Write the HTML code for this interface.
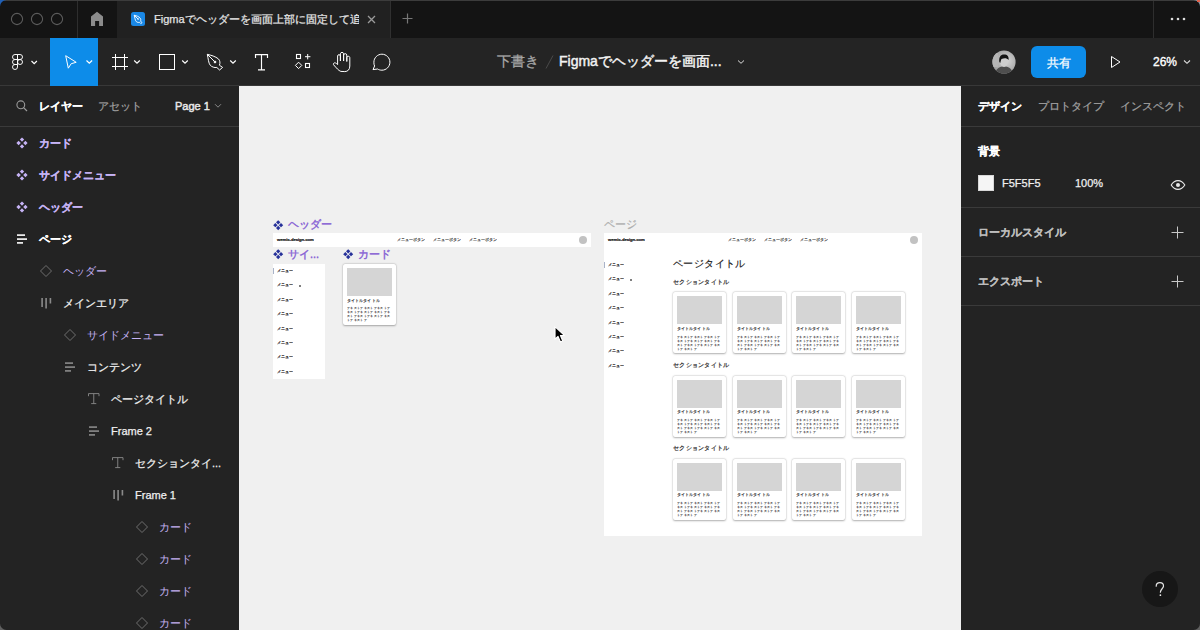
<!DOCTYPE html>
<html lang="ja">
<head>
<meta charset="utf-8">
<style>
*{box-sizing:border-box;margin:0;padding:0}
html,body{width:1200px;height:630px;overflow:hidden;background:#f0f0f0;font-family:"Liberation Sans",sans-serif;position:relative}
.a{position:absolute}
#tabs{left:0;top:0;width:1200px;height:38px;background:#141414}
#tool{left:0;top:38px;width:1200px;height:48px;background:#242424;border-bottom:1px solid #383838}
#lp{left:0;top:86px;width:239px;height:544px;background:#232323}
#rp{left:961px;top:86px;width:239px;height:544px;background:#232323}
.ic{position:absolute;overflow:visible}
.t{position:absolute;white-space:nowrap;line-height:1}
.m{-webkit-text-stroke:0.25px currentColor}
.t[style*="font-weight:bold"]{-webkit-text-stroke:0.15px currentColor}
.div{position:absolute;height:1px;background:#3a3a3a}

.card{position:absolute;width:53px;height:61px;background:#fff;border-radius:2px;box-shadow:0 0.8px 2px rgba(0,0,0,.3),0 0 0 0.5px rgba(0,0,0,.05)}
.card .im{position:absolute;left:4px;top:4px;width:45px;height:28px;background:#d5d5d5}
.sc{position:absolute;transform-origin:0 0;white-space:nowrap;line-height:1}
.card .ct{left:4px;top:34.6px;font-size:16px;letter-spacing:0.4px;color:#333;font-weight:normal;-webkit-text-stroke:0.7px #333;transform:scale(0.25)}
.card .cb{left:4px;top:42.2px;width:176px;white-space:normal;font-size:13px;letter-spacing:0.4px;line-height:15.8px;color:#2a2a2a;font-weight:bold;word-break:break-all;transform:scale(0.25)}
.mt{position:absolute;font-size:4px;line-height:1;color:#333;white-space:nowrap;font-weight:bold}
.mi{position:absolute;font-size:4px;line-height:1;color:#222;white-space:nowrap;font-weight:bold}
</style>
</head>
<body>
<!--CANVAS-->
<div id="canvas" class="a" style="left:239px;top:86px;width:722px;height:544px;background:#f0f0f0"></div>
<svg class="ic" style="left:273.3px;top:220.0px" width="10.4" height="10.4" viewBox="-5.5 -5.5 11 11"><g fill="#27329a"><path d="M0 -5.3L2.3 -3L0 -0.7L-2.3 -3Z"/><path d="M0 5.3L2.3 3L0 0.7L-2.3 3Z"/><path d="M-5.3 0L-3 2.3L-0.7 0L-3 -2.3Z"/><path d="M5.3 0L3 2.3L0.7 0L3 -2.3Z"/></g></svg><div class="t" style="left:288px;top:219.1px;font-size:11px;color:#8761d4;-webkit-text-stroke:0.4px #8761d4">ヘッダー</div>
<div class="a" style="left:273px;top:233px;width:318px;height:14px;background:#fff"></div><div class="sc" style="left:277px;top:237.1px;font-size:17px;letter-spacing:-0.35px;color:#111;font-weight:bold;-webkit-text-stroke:0.8px #111;transform:scale(0.25)">wemix-design.com</div><div class="sc" style="left:397px;top:238px;font-size:16px;letter-spacing:-0.15px;color:#444;-webkit-text-stroke:0.8px #444;transform:scale(0.25)">メニューボタン</div><div class="sc" style="left:433px;top:238px;font-size:16px;letter-spacing:-0.15px;color:#444;-webkit-text-stroke:0.8px #444;transform:scale(0.25)">メニューボタン</div><div class="sc" style="left:468.5px;top:238px;font-size:16px;letter-spacing:-0.15px;color:#444;-webkit-text-stroke:0.8px #444;transform:scale(0.25)">メニューボタン</div><div class="a" style="left:578.5px;top:235.5px;width:8.6px;height:8.6px;border-radius:50%;background:#c2c2c2"></div>
<svg class="ic" style="left:273.3px;top:249.4px" width="10.4" height="10.4" viewBox="-5.5 -5.5 11 11"><g fill="#27329a"><path d="M0 -5.3L2.3 -3L0 -0.7L-2.3 -3Z"/><path d="M0 5.3L2.3 3L0 0.7L-2.3 3Z"/><path d="M-5.3 0L-3 2.3L-0.7 0L-3 -2.3Z"/><path d="M5.3 0L3 2.3L0.7 0L3 -2.3Z"/></g></svg><div class="t" style="left:288px;top:248.5px;font-size:11px;color:#8761d4;-webkit-text-stroke:0.4px #8761d4">サイ...</div>
<div class="a" style="left:273px;top:264px;width:52px;height:115px;background:#fff"></div>
<div class="a" style="left:273px;top:267.8px;width:1.3px;height:6px;background:#a9b3c8"></div><div class="sc" style="left:277px;top:269.0px;font-size:16px;color:#2a2a2a;font-weight:bold;-webkit-text-stroke:0.2px #2a2a2a;transform:scale(0.25)">メニュー</div><div class="sc" style="left:277px;top:283.4px;font-size:16px;color:#2a2a2a;font-weight:bold;-webkit-text-stroke:0.2px #2a2a2a;transform:scale(0.25)">メニュー</div><div class="sc" style="left:277px;top:297.8px;font-size:16px;color:#2a2a2a;font-weight:bold;-webkit-text-stroke:0.2px #2a2a2a;transform:scale(0.25)">メニュー</div><div class="sc" style="left:277px;top:312.2px;font-size:16px;color:#2a2a2a;font-weight:bold;-webkit-text-stroke:0.2px #2a2a2a;transform:scale(0.25)">メニュー</div><div class="sc" style="left:277px;top:326.6px;font-size:16px;color:#2a2a2a;font-weight:bold;-webkit-text-stroke:0.2px #2a2a2a;transform:scale(0.25)">メニュー</div><div class="sc" style="left:277px;top:341.0px;font-size:16px;color:#2a2a2a;font-weight:bold;-webkit-text-stroke:0.2px #2a2a2a;transform:scale(0.25)">メニュー</div><div class="sc" style="left:277px;top:355.4px;font-size:16px;color:#2a2a2a;font-weight:bold;-webkit-text-stroke:0.2px #2a2a2a;transform:scale(0.25)">メニュー</div><div class="sc" style="left:277px;top:369.8px;font-size:16px;color:#2a2a2a;font-weight:bold;-webkit-text-stroke:0.2px #2a2a2a;transform:scale(0.25)">メニュー</div><div class="a" style="left:299px;top:284.59999999999997px;width:2px;height:2px;border-radius:50%;background:#555"></div>
<svg class="ic" style="left:343.3px;top:249.4px" width="10.4" height="10.4" viewBox="-5.5 -5.5 11 11"><g fill="#27329a"><path d="M0 -5.3L2.3 -3L0 -0.7L-2.3 -3Z"/><path d="M0 5.3L2.3 3L0 0.7L-2.3 3Z"/><path d="M-5.3 0L-3 2.3L-0.7 0L-3 -2.3Z"/><path d="M5.3 0L3 2.3L0.7 0L3 -2.3Z"/></g></svg><div class="t" style="left:358px;top:248.5px;font-size:11px;color:#8761d4;-webkit-text-stroke:0.4px #8761d4">カード</div>
<div class="card" style="left:343px;top:264px"><div class="im"></div><div class="sc ct">タイトルタイトル</div><div class="sc cb">テキストテキストテキストテキストテキストテキストテキストテキストテキストテキストテキストテ</div></div>
<div class="t" style="left:604px;top:218.5px;font-size:11px;color:#adadad;-webkit-text-stroke:0.2px #adadad">ページ</div>
<div class="a" style="left:604px;top:233px;width:318px;height:303px;background:#fff"></div>
<div class="a" style="left:604px;top:233px;width:318px;height:14px;background:#fff"></div><div class="sc" style="left:608px;top:237.1px;font-size:17px;letter-spacing:-0.35px;color:#111;font-weight:bold;-webkit-text-stroke:0.8px #111;transform:scale(0.25)">wemix-design.com</div><div class="sc" style="left:728px;top:238px;font-size:16px;letter-spacing:-0.15px;color:#444;-webkit-text-stroke:0.8px #444;transform:scale(0.25)">メニューボタン</div><div class="sc" style="left:764px;top:238px;font-size:16px;letter-spacing:-0.15px;color:#444;-webkit-text-stroke:0.8px #444;transform:scale(0.25)">メニューボタン</div><div class="sc" style="left:799.5px;top:238px;font-size:16px;letter-spacing:-0.15px;color:#444;-webkit-text-stroke:0.8px #444;transform:scale(0.25)">メニューボタン</div><div class="a" style="left:909.5px;top:235.5px;width:8.6px;height:8.6px;border-radius:50%;background:#c2c2c2"></div>
<div class="a" style="left:603.5px;top:261.7px;width:1.3px;height:6px;background:#a9b3c8"></div><div class="sc" style="left:607.5px;top:262.9px;font-size:16px;color:#2a2a2a;font-weight:bold;-webkit-text-stroke:0.2px #2a2a2a;transform:scale(0.25)">メニュー</div><div class="sc" style="left:607.5px;top:277.29999999999995px;font-size:16px;color:#2a2a2a;font-weight:bold;-webkit-text-stroke:0.2px #2a2a2a;transform:scale(0.25)">メニュー</div><div class="sc" style="left:607.5px;top:291.7px;font-size:16px;color:#2a2a2a;font-weight:bold;-webkit-text-stroke:0.2px #2a2a2a;transform:scale(0.25)">メニュー</div><div class="sc" style="left:607.5px;top:306.09999999999997px;font-size:16px;color:#2a2a2a;font-weight:bold;-webkit-text-stroke:0.2px #2a2a2a;transform:scale(0.25)">メニュー</div><div class="sc" style="left:607.5px;top:320.5px;font-size:16px;color:#2a2a2a;font-weight:bold;-webkit-text-stroke:0.2px #2a2a2a;transform:scale(0.25)">メニュー</div><div class="sc" style="left:607.5px;top:334.9px;font-size:16px;color:#2a2a2a;font-weight:bold;-webkit-text-stroke:0.2px #2a2a2a;transform:scale(0.25)">メニュー</div><div class="sc" style="left:607.5px;top:349.29999999999995px;font-size:16px;color:#2a2a2a;font-weight:bold;-webkit-text-stroke:0.2px #2a2a2a;transform:scale(0.25)">メニュー</div><div class="sc" style="left:607.5px;top:363.7px;font-size:16px;color:#2a2a2a;font-weight:bold;-webkit-text-stroke:0.2px #2a2a2a;transform:scale(0.25)">メニュー</div><div class="a" style="left:629.5px;top:278.49999999999994px;width:2px;height:2px;border-radius:50%;background:#555"></div>
<div class="sc" style="left:673px;top:257.6px;font-size:20px;letter-spacing:0.8px;color:#1a1a1a;transform:scale(0.5);-webkit-text-stroke:0.3px #1a1a1a">ページタイトル</div>
<div class="sc" style="left:673px;top:278.90px;font-size:24px;color:#333;font-weight:normal;-webkit-text-stroke:0.9px #333;transform:scale(0.25)">セクションタイトル</div>
<div class="card" style="left:672.8px;top:292.4px"><div class="im"></div><div class="sc ct">タイトルタイトル</div><div class="sc cb">テキストテキストテキストテキストテキストテキストテキストテキストテキストテキストテキストテ</div></div>
<div class="card" style="left:732.6px;top:292.4px"><div class="im"></div><div class="sc ct">タイトルタイトル</div><div class="sc cb">テキストテキストテキストテキストテキストテキストテキストテキストテキストテキストテキストテ</div></div>
<div class="card" style="left:792.4px;top:292.4px"><div class="im"></div><div class="sc ct">タイトルタイトル</div><div class="sc cb">テキストテキストテキストテキストテキストテキストテキストテキストテキストテキストテキストテ</div></div>
<div class="card" style="left:852.2px;top:292.4px"><div class="im"></div><div class="sc ct">タイトルタイトル</div><div class="sc cb">テキストテキストテキストテキストテキストテキストテキストテキストテキストテキストテキストテ</div></div>
<div class="sc" style="left:673px;top:361.90px;font-size:24px;color:#333;font-weight:normal;-webkit-text-stroke:0.9px #333;transform:scale(0.25)">セクションタイトル</div>
<div class="card" style="left:672.8px;top:375.6px"><div class="im"></div><div class="sc ct">タイトルタイトル</div><div class="sc cb">テキストテキストテキストテキストテキストテキストテキストテキストテキストテキストテキストテ</div></div>
<div class="card" style="left:732.6px;top:375.6px"><div class="im"></div><div class="sc ct">タイトルタイトル</div><div class="sc cb">テキストテキストテキストテキストテキストテキストテキストテキストテキストテキストテキストテ</div></div>
<div class="card" style="left:792.4px;top:375.6px"><div class="im"></div><div class="sc ct">タイトルタイトル</div><div class="sc cb">テキストテキストテキストテキストテキストテキストテキストテキストテキストテキストテキストテ</div></div>
<div class="card" style="left:852.2px;top:375.6px"><div class="im"></div><div class="sc ct">タイトルタイトル</div><div class="sc cb">テキストテキストテキストテキストテキストテキストテキストテキストテキストテキストテキストテ</div></div>
<div class="sc" style="left:673px;top:445.00px;font-size:24px;color:#333;font-weight:normal;-webkit-text-stroke:0.9px #333;transform:scale(0.25)">セクションタイトル</div>
<div class="card" style="left:672.8px;top:458.8px"><div class="im"></div><div class="sc ct">タイトルタイトル</div><div class="sc cb">テキストテキストテキストテキストテキストテキストテキストテキストテキストテキストテキストテ</div></div>
<div class="card" style="left:732.6px;top:458.8px"><div class="im"></div><div class="sc ct">タイトルタイトル</div><div class="sc cb">テキストテキストテキストテキストテキストテキストテキストテキストテキストテキストテキストテ</div></div>
<div class="card" style="left:792.4px;top:458.8px"><div class="im"></div><div class="sc ct">タイトルタイトル</div><div class="sc cb">テキストテキストテキストテキストテキストテキストテキストテキストテキストテキストテキストテ</div></div>
<div class="card" style="left:852.2px;top:458.8px"><div class="im"></div><div class="sc ct">タイトルタイトル</div><div class="sc cb">テキストテキストテキストテキストテキストテキストテキストテキストテキストテキストテキストテ</div></div>
<svg class="ic" style="left:550px;top:322px" width="20" height="26" viewBox="550 322 20 26"><path d="M555 326.6 L555 339.2 L558 336.4 L560.4 342 L562.8 341 L560.5 335.6 L564.4 335.4 Z" fill="#000" stroke="#fff" stroke-width="1.2" stroke-linejoin="round"/></svg>
<!--/CANVAS-->
<!-- TAB BAR -->
<div id="tabs" class="a">
  <div class="a" style="left:0;top:0;width:1200px;height:1px;background:#3c3c3c"></div>
  <svg class="ic" style="left:0;top:0" width="80" height="38">
    <circle cx="17" cy="19" r="5.6" fill="none" stroke="#5c5c5c" stroke-width="1.1"/>
    <circle cx="37" cy="19" r="5.6" fill="none" stroke="#5c5c5c" stroke-width="1.1"/>
    <circle cx="57" cy="19" r="5.6" fill="none" stroke="#5c5c5c" stroke-width="1.1"/>
  </svg>
  <div class="a" style="left:77px;top:1px;width:1px;height:37px;background:#2e2e2e"></div>
  <svg class="ic" style="left:88px;top:10px" width="18" height="18" viewBox="88 10 18 18"><path d="M91 16.6 L97 11.8 L103 16.6 V26 H99.1 V21 H95.1 V26 H91 Z" fill="#8c8c8c"/></svg>
  <div class="a" style="left:117px;top:1px;width:274px;height:37px;background:#212121;border-right:1px solid #303030"></div>
  <svg class="ic" style="left:131px;top:12px" width="14" height="14" viewBox="0 0 14 14"><rect x="0" y="0" width="14" height="14" rx="2.5" fill="#1a88e6"/><g fill="none" stroke="#fff" stroke-width="0.9" stroke-linejoin="round"><path d="M3.2 3.2 C5.5 3.8 8 4.6 9.2 6.2 C10 7.2 9.9 8.3 9.5 9 L11 10.6 L9.8 11.6 L8.5 10.3 C7.5 10.6 6.3 10.5 5.3 9.6 C4 8.3 3.8 5.5 3.2 3.2 Z"/><path d="M3.2 3.2 L7 7"/></g><circle cx="7.1" cy="7.1" r="0.8" fill="#fff"/></svg>
  <div class="t m" style="left:154px;top:14px;font-size:11px;color:#e4e4e4;width:205px;overflow:hidden">Figmaでヘッダーを画面上部に固定して追従</div>
  <svg class="ic" style="left:367px;top:15px" width="9" height="9" viewBox="0 0 9 9"><path d="M1 1L8 8M8 1L1 8" stroke="#9a9a9a" stroke-width="1.3"/></svg>
  <svg class="ic" style="left:402px;top:13px" width="11" height="11" viewBox="0 0 11 11"><path d="M5.5 0.5V10.5M0.5 5.5H10.5" stroke="#777" stroke-width="1.2"/></svg>
  <div class="a" style="left:1153px;top:1px;width:1px;height:37px;background:#2e2e2e"></div>
  <svg class="ic" style="left:1168px;top:16px" width="20" height="6"><circle cx="4" cy="3" r="1.3" fill="#ddd"/><circle cx="10" cy="3" r="1.3" fill="#ddd"/><circle cx="16" cy="3" r="1.3" fill="#ddd"/></svg>
</div>
<!-- TOOLBAR -->
<div id="tool" class="a"></div>
<div class="a" style="left:50px;top:38px;width:48px;height:48px;background:#0d8ce9"></div>

<svg class="ic" style="left:0;top:38px" width="1200" height="48" viewBox="0 38 1200 48">
 <g fill="none" stroke="#fff" stroke-width="1">
  <!-- figma logo 12-23 x 54-70 -->
  <g transform="translate(12.5,54.5) scale(0.2632)" stroke-width="3.6">
   <path d="M19 28.5a9.5 9.5 0 1 1 19 0 9.5 9.5 0 0 1-19 0z"/>
   <path d="M0 47.5A9.5 9.5 0 0 1 9.5 38H19v9.5a9.5 9.5 0 1 1-19 0z"/>
   <path d="M19 0v19h9.5a9.5 9.5 0 1 0 0-19H19z"/>
   <path d="M0 9.5A9.5 9.5 0 0 0 9.5 19H19V0H9.5A9.5 9.5 0 0 0 0 9.5z"/>
   <path d="M0 28.5A9.5 9.5 0 0 0 9.5 38H19V19H9.5A9.5 9.5 0 0 0 0 28.5z"/>
  </g>
  <path d="M31.5 61 L34.2 63.6 L36.9 61" stroke-width="1.2"/>
  <!-- move -->
  <path d="M65.7 55.7 L76.2 62.3 L71.2 63.7 L68.3 68.2 Z" stroke-linejoin="miter"/>
  <path d="M86.5 60.5 L89.3 63.2 L92.1 60.5" stroke-width="1.2"/>
  <!-- frame -->
  <path d="M115.5 54V70 M124.5 54V70 M112 57.5H128 M112 66.5H128"/>
  <path d="M134.2 60.5 L137 63.2 L139.8 60.5" stroke-width="1.2"/>
  <!-- rect -->
  <rect x="159.5" y="54.5" width="15" height="15"/>
  <path d="M182.2 60.5 L185 63.2 L187.8 60.5" stroke-width="1.2"/>
  <!-- pen -->
  <path d="M207.3 54.3 C211 55.2 215.5 56.5 218.3 58.8 C220.2 60.5 220.3 63.2 219.4 65.2 L222.6 67.4 L219.6 70 L216.8 67.5 C214.5 67.8 211.8 67 210.2 65.2 C208.5 63 208.3 59 207.3 54.3 Z" stroke-linejoin="round"/>
  <path d="M207.3 54.3 L214.8 61.8"/>
  <circle cx="215" cy="62" r="0.9" fill="#fff"/>
  <path d="M230.2 60.5 L233 63.2 L235.8 60.5" stroke-width="1.2"/>
  <!-- text T -->
  <path d="M255.5 58 V54.6 H267.5 V58 M261.5 54.6 V69.8 M258 69.8 H265" stroke-width="1.15"/>
  <!-- resources -->
  <rect x="296.5" y="54.5" width="4" height="4" stroke-width="1.1"/>
  <path d="M307.7 54 V59.4 M305 56.7 H310.4"/>
  <path d="M298.6 62.2 L301.8 65.4 L298.6 68.6 L295.4 65.4 Z"/>
  <rect x="305.5" y="63.5" width="4" height="4" stroke-width="1.1"/>
  <!-- hand -->
  <path d="M340.8 71.4 C338.5 70.6 336.5 68 333.6 64.8 C333 64 333.6 62.8 334.8 62.8 C335.6 62.8 336.6 63.6 337.6 64.6 V56 C337.6 54.2 340.4 54.2 340.4 56 V61 V53.8 C340.4 51.9 343.6 51.9 343.6 53.8 V61 V55 C343.6 53.2 346.8 53.2 346.8 55 V61.5 V57.6 C346.8 55.8 349.8 55.8 349.8 57.6 V66 C349.8 69.5 347.8 71.6 344.8 71.6 Z" stroke-linejoin="round"/>
  <!-- comment -->
  <path d="M373 69.6 L374.6 66 C374 65 373.9 63.6 373.9 62.2 C373.9 57.8 377.5 54.2 381.9 54.2 C386.3 54.2 389.9 57.8 389.9 62.2 C389.9 66.6 386.3 70.2 381.9 70.2 C380 70.2 378.5 69.6 377.6 69 Z" stroke-linejoin="round"/>
 </g>
</svg>
<div class="t m" style="left:497px;top:54px;font-size:14px;color:#a8a8a8;font-weight:normal">下書き</div>
<svg class="ic" style="left:540px;top:50px" width="20" height="24"><path d="M13 5.5L6 18.5" stroke="#4a4a4a" stroke-width="1"/></svg>
<div class="t" style="left:559px;top:54px;font-size:14px;color:#f2f2f2;-webkit-text-stroke:0.45px #f2f2f2">Figmaでヘッダーを画面...</div>
<svg class="ic" style="left:0;top:38px" width="1200" height="48" viewBox="0 38 1200 48"><g fill="none" stroke="#ddd" stroke-width="1">
  <path d="M738 60.5 L741 63.3 L744 60.5"/>
  <path d="M1111.5 56.5 L1120 62 L1111.5 67.5 Z" stroke="#fff" stroke-linejoin="round"/>
  <path d="M1184 60.5 L1187 63.3 L1190 60.5" stroke="#e0e0e0" stroke-width="1.1"/>
</g></svg>
<svg class="ic" style="left:992px;top:50px" width="24" height="24" viewBox="0 0 24 24"><defs><clipPath id="av"><circle cx="12" cy="12" r="11.6"/></clipPath><radialGradient id="avg" cx="0.6" cy="0.45" r="0.6"><stop offset="0" stop-color="#d8d8d8"/><stop offset="1" stop-color="#9a9a9a"/></radialGradient></defs>
<g clip-path="url(#av)"><rect width="24" height="24" fill="url(#avg)"/><rect x="0" y="3" width="6" height="14" fill="#b5b5b5"/>
<path d="M3 24 C4 18 8 16.5 12 16.5 C16 16.5 20 18 21 24 Z" fill="#4e4e4e"/>
<ellipse cx="12" cy="12" rx="3.8" ry="5" fill="#cfcfcf"/>
<path d="M7.3 12 C6.8 7 8.5 4.5 12 4.5 C15.5 4.5 17 6.5 16.6 10 C15 8 12.5 7.5 9.5 9 C9 10 8.5 11.5 8.3 13 Z" fill="#151515"/>
</g></svg>
<div class="a" style="left:1031px;top:46px;width:55px;height:32px;border-radius:6px;background:#0d8ce9"></div>
<div class="t m" style="left:1047px;top:56.5px;font-size:12px;color:#fff;font-weight:normal">共有</div>
<div class="t" style="left:1153px;top:56px;font-size:12px;color:#fff;-webkit-text-stroke:0.35px #fff">26%</div>
<div id="lp" class="a"></div>
<div id="rp" class="a"></div>
<svg class="ic" style="left:16px;top:100px" width="12" height="12" viewBox="0 0 12 12"><circle cx="4.8" cy="4.8" r="3.9" fill="none" stroke="#9a9a9a" stroke-width="1.1"/><path d="M7.6 7.6L11 11" stroke="#9a9a9a" stroke-width="1.2"/></svg>
<div class="t" style="left:39px;top:100.8px;font-size:11px;color:#fff;font-weight:bold">レイヤー</div>
<div class="t m" style="left:98px;top:100.8px;font-size:11px;color:#a0a0a0;font-weight:normal">アセット</div>
<div class="t" style="left:175px;top:100.8px;font-size:11px;color:#e8e8e8;font-weight:normal;-webkit-text-stroke:0.45px #e8e8e8">Page 1</div>
<svg class="ic" style="left:214px;top:103px" width="8" height="6"><path d="M1 1.2L4 4.2L7 1.2" fill="none" stroke="#888" stroke-width="1"/></svg>
<div class="div" style="left:0;top:126px;width:239px"></div>
<svg class="ic" style="left:16px;top:137px" width="12" height="12" viewBox="-6 -6 12 12"><g fill="#c6b3f5"><path d="M0 -5.6L2.2 -3.4L0 -1.2L-2.2 -3.4Z"/><path d="M0 5.6L2.2 3.4L0 1.2L-2.2 3.4Z"/><path d="M-5.6 0L-3.4 2.2L-1.2 0L-3.4 -2.2Z"/><path d="M5.6 0L3.4 2.2L1.2 0L3.4 -2.2Z"/></g></svg>
<div class="t" style="left:39px;top:137.8px;font-size:11px;color:#c6b3f5;font-weight:bold">カード</div>
<svg class="ic" style="left:16px;top:169px" width="12" height="12" viewBox="-6 -6 12 12"><g fill="#c6b3f5"><path d="M0 -5.6L2.2 -3.4L0 -1.2L-2.2 -3.4Z"/><path d="M0 5.6L2.2 3.4L0 1.2L-2.2 3.4Z"/><path d="M-5.6 0L-3.4 2.2L-1.2 0L-3.4 -2.2Z"/><path d="M5.6 0L3.4 2.2L1.2 0L3.4 -2.2Z"/></g></svg>
<div class="t" style="left:39px;top:169.8px;font-size:11px;color:#c6b3f5;font-weight:bold">サイドメニュー</div>
<svg class="ic" style="left:16px;top:201px" width="12" height="12" viewBox="-6 -6 12 12"><g fill="#c6b3f5"><path d="M0 -5.6L2.2 -3.4L0 -1.2L-2.2 -3.4Z"/><path d="M0 5.6L2.2 3.4L0 1.2L-2.2 3.4Z"/><path d="M-5.6 0L-3.4 2.2L-1.2 0L-3.4 -2.2Z"/><path d="M5.6 0L3.4 2.2L1.2 0L3.4 -2.2Z"/></g></svg>
<div class="t" style="left:39px;top:201.8px;font-size:11px;color:#c6b3f5;font-weight:bold">ヘッダー</div>
<svg class="ic" style="left:17px;top:234px" width="11" height="11" viewBox="0 0 11 11"><g fill="#fff"><rect x="0" y="0.3" width="8" height="1.6"/><rect x="0" y="4.3" width="10" height="1.6"/><rect x="0" y="8.1" width="6" height="1.6"/></g></svg>
<div class="t" style="left:39px;top:233.8px;font-size:11px;color:#fff;font-weight:bold">ページ</div>
<svg class="ic" style="left:39px;top:264px" width="14" height="14" viewBox="-7 -7 14 14"><path d="M0 -5.5L5.5 0L0 5.5L-5.5 0Z" fill="none" stroke="#6e6e6e" stroke-width="1"/></svg>
<div class="t" style="left:63px;top:265.8px;font-size:11px;color:#c6b3f5;font-weight:normal">ヘッダー</div>
<svg class="ic" style="left:41px;top:298px" width="11" height="11" viewBox="0 0 11 11"><g fill="#8a8a8a"><rect x="0.3" y="0" width="1.6" height="9"/><rect x="4.3" y="0" width="1.6" height="10.5"/><rect x="8.6" y="0" width="1.6" height="5.5"/></g></svg>
<div class="t m" style="left:63px;top:297.8px;font-size:11px;color:#f0f0f0;font-weight:normal">メインエリア</div>
<svg class="ic" style="left:63px;top:328px" width="14" height="14" viewBox="-7 -7 14 14"><path d="M0 -5.5L5.5 0L0 5.5L-5.5 0Z" fill="none" stroke="#6e6e6e" stroke-width="1"/></svg>
<div class="t" style="left:87px;top:329.8px;font-size:11px;color:#c6b3f5;font-weight:normal">サイドメニュー</div>
<svg class="ic" style="left:65px;top:362px" width="11" height="11" viewBox="0 0 11 11"><g fill="#8a8a8a"><rect x="0" y="0.3" width="8" height="1.6"/><rect x="0" y="4.3" width="10" height="1.6"/><rect x="0" y="8.1" width="6" height="1.6"/></g></svg>
<div class="t m" style="left:87px;top:361.8px;font-size:11px;color:#f0f0f0;font-weight:normal">コンテンツ</div>
<svg class="ic" style="left:88px;top:393px" width="12" height="12" viewBox="0 0 12 12"><path d="M0.5 3.2V0.6H11V3.2M5.75 0.6V10.6M3.2 10.6H8.3" fill="none" stroke="#8a8a8a" stroke-width="0.9"/></svg>
<div class="t m" style="left:111px;top:393.8px;font-size:11px;color:#f0f0f0;font-weight:normal">ページタイトル</div>
<svg class="ic" style="left:89px;top:426px" width="11" height="11" viewBox="0 0 11 11"><g fill="#8a8a8a"><rect x="0" y="0.3" width="8" height="1.6"/><rect x="0" y="4.3" width="10" height="1.6"/><rect x="0" y="8.1" width="6" height="1.6"/></g></svg>
<div class="t m" style="left:111px;top:425.8px;font-size:11px;color:#f0f0f0;font-weight:normal">Frame 2</div>
<svg class="ic" style="left:112px;top:457px" width="12" height="12" viewBox="0 0 12 12"><path d="M0.5 3.2V0.6H11V3.2M5.75 0.6V10.6M3.2 10.6H8.3" fill="none" stroke="#8a8a8a" stroke-width="0.9"/></svg>
<div class="t m" style="left:135px;top:457.8px;font-size:11px;color:#f0f0f0;font-weight:normal">セクションタイ...</div>
<svg class="ic" style="left:113px;top:490px" width="11" height="11" viewBox="0 0 11 11"><g fill="#8a8a8a"><rect x="0.3" y="0" width="1.6" height="9"/><rect x="4.3" y="0" width="1.6" height="10.5"/><rect x="8.6" y="0" width="1.6" height="5.5"/></g></svg>
<div class="t m" style="left:135px;top:489.8px;font-size:11px;color:#f0f0f0;font-weight:normal">Frame 1</div>
<svg class="ic" style="left:135px;top:520px" width="14" height="14" viewBox="-7 -7 14 14"><path d="M0 -5.5L5.5 0L0 5.5L-5.5 0Z" fill="none" stroke="#6e6e6e" stroke-width="1"/></svg>
<div class="t" style="left:159px;top:521.8px;font-size:11px;color:#c6b3f5;font-weight:normal">カード</div>
<svg class="ic" style="left:135px;top:552px" width="14" height="14" viewBox="-7 -7 14 14"><path d="M0 -5.5L5.5 0L0 5.5L-5.5 0Z" fill="none" stroke="#6e6e6e" stroke-width="1"/></svg>
<div class="t" style="left:159px;top:553.8px;font-size:11px;color:#c6b3f5;font-weight:normal">カード</div>
<svg class="ic" style="left:135px;top:584px" width="14" height="14" viewBox="-7 -7 14 14"><path d="M0 -5.5L5.5 0L0 5.5L-5.5 0Z" fill="none" stroke="#6e6e6e" stroke-width="1"/></svg>
<div class="t" style="left:159px;top:585.8px;font-size:11px;color:#c6b3f5;font-weight:normal">カード</div>
<svg class="ic" style="left:135px;top:616px" width="14" height="14" viewBox="-7 -7 14 14"><path d="M0 -5.5L5.5 0L0 5.5L-5.5 0Z" fill="none" stroke="#6e6e6e" stroke-width="1"/></svg>
<div class="t" style="left:159px;top:617.8px;font-size:11px;color:#c6b3f5;font-weight:normal">カード</div>
<div class="t" style="left:978px;top:100.8px;font-size:11px;color:#fff;font-weight:bold">デザイン</div>
<div class="t m" style="left:1038px;top:100.8px;font-size:11px;color:#a0a0a0;font-weight:normal">プロトタイプ</div>
<div class="t m" style="left:1120px;top:100.8px;font-size:11px;color:#a0a0a0;font-weight:normal">インスペクト</div>
<div class="div" style="left:961px;top:126px;width:239px"></div>
<div class="t" style="left:978px;top:145.8px;font-size:11px;color:#fff;font-weight:bold">背景</div>
<div class="a" style="left:978px;top:175px;width:16px;height:16px;background:#f5f5f5;border:1px solid #d8d8d8"></div>
<div class="t m" style="left:1002px;top:177.8px;font-size:11px;color:#f0f0f0;font-weight:normal">F5F5F5</div>
<div class="t m" style="left:1075px;top:177.8px;font-size:11px;color:#f0f0f0;font-weight:normal">100%</div>
<svg class="ic" style="left:1170px;top:178.5px" width="16" height="12" viewBox="0 0 16 12"><path d="M1.2 6C3 3 5.3 1.6 8 1.6S13 3 14.8 6C13 9 10.7 10.4 8 10.4S3 9 1.2 6Z" fill="none" stroke="#e8e8e8" stroke-width="1.1"/><circle cx="8" cy="6" r="2" fill="#e8e8e8"/></svg>
<div class="div" style="left:961px;top:207px;width:239px"></div>
<div class="t" style="left:978px;top:226.8px;font-size:11px;color:#bdbdbd;font-weight:bold">ローカルスタイル</div>
<svg class="ic" style="left:1171px;top:226px" width="13" height="13"><path d="M6.5 0.5V12.5M0.5 6.5H12.5" stroke="#c8c8c8" stroke-width="1"/></svg>
<div class="div" style="left:961px;top:256px;width:239px"></div>
<div class="t" style="left:978px;top:275.8px;font-size:11px;color:#bdbdbd;font-weight:bold">エクスポート</div>
<svg class="ic" style="left:1171px;top:275px" width="13" height="13"><path d="M6.5 0.5V12.5M0.5 6.5H12.5" stroke="#c8c8c8" stroke-width="1"/></svg>
<div class="div" style="left:961px;top:305px;width:239px"></div>
<div class="a" style="left:1142px;top:571px;width:36px;height:36px;border-radius:50%;background:#171717"></div>
<svg class="ic" style="left:1150px;top:578px" width="20" height="22" viewBox="1150 578 20 22"><path d="M1156.2 586.2 C1156.2 583.8 1158 582.6 1159.9 582.6 C1161.9 582.6 1163.5 584 1163.5 586 C1163.5 588.4 1160.4 589.2 1160.4 592.2" fill="none" stroke="#e6e6e6" stroke-width="1.2" stroke-linecap="round"/><circle cx="1160.4" cy="595.2" r="0.85" fill="#e6e6e6"/></svg>
<svg class="ic" style="left:0;top:0" width="8" height="8"><path d="M0 0H6.5A6.5 6.5 0 0 0 0 6.5Z" fill="#1f5fb5"/></svg>
<svg class="ic" style="left:1192px;top:0" width="8" height="8"><path d="M8 0H1.5A6.5 6.5 0 0 1 8 6.5Z" fill="#8a9aa8"/><rect x="5" y="0" width="3" height="2" fill="#e0604a"/></svg>
<svg class="ic" style="left:0;top:622px" width="8" height="8"><path d="M0 8H6.5A6.5 6.5 0 0 1 0 1.5Z" fill="#606060"/></svg>
<svg class="ic" style="left:1192px;top:622px" width="8" height="8"><path d="M8 8H1.5A6.5 6.5 0 0 0 8 1.5Z" fill="#606060"/></svg>
</body>
</html>
